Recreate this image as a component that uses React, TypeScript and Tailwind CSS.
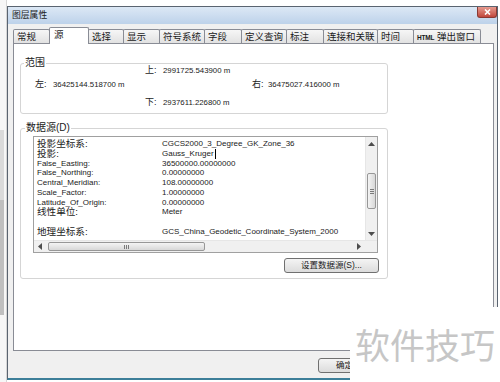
import React from "react";

const tabs: { t: string; w: string; active?: boolean }[] = [
  { t: "常规", w: "w-[37px]" },
  { t: "源", w: "w-[40px]", active: true },
  { t: "选择", w: "w-[36px]" },
  { t: "显示", w: "w-[37px]" },
  { t: "符号系统", w: "w-[46px]" },
  { t: "字段", w: "w-[38px]" },
  { t: "定义查询", w: "w-[46px]" },
  { t: "标注", w: "w-[38px]" },
  { t: "连接和关联", w: "w-[55px]" },
  { t: "时间", w: "w-[37px]" },
  { t: "HTML", w: "w-[68px]" },
];

const rows: { l: string; v: string; cjk?: boolean; cursor?: boolean }[] = [
  { l: "投影坐标系:", v: "CGCS2000_3_Degree_GK_Zone_36", cjk: true },
  { l: "投影:", v: "Gauss_Kruger", cjk: true, cursor: true },
  { l: "False_Easting:", v: "36500000.00000000" },
  { l: "False_Northing:", v: "0.00000000" },
  { l: "Central_Meridian:", v: "108.00000000" },
  { l: "Scale_Factor:", v: "1.00000000" },
  { l: "Latitude_Of_Origin:", v: "0.00000000" },
  { l: "线性单位:", v: "Meter", cjk: true },
  { l: "", v: "" },
  { l: "地理坐标系:", v: "GCS_China_Geodetic_Coordinate_System_2000", cjk: true },
];

function Tri({ dir }: { dir: "up" | "down" | "left" | "right" }) {
  const pts =
    dir === "up"
      ? "0,4 3.5,0 7,4"
      : dir === "down"
      ? "0,0 3.5,4 7,0"
      : dir === "left"
      ? "4,0 0,3.5 4,7"
      : "0,0 4,3.5 0,7";
  const w = dir === "up" || dir === "down" ? 7 : 4;
  const h = dir === "up" || dir === "down" ? 4 : 7;
  return (
    <svg width={w} height={h} viewBox={`0 0 ${w} ${h}`}>
      <polygon points={pts} fill="#4d4d4d" />
    </svg>
  );
}

export default function App() {
  return (
    <div className='relative w-[500px] h-[382px] overflow-hidden bg-white flex font-["Liberation_Sans","Noto_Sans_CJK_SC",sans-serif] text-[#1a1a1a]'>
      {/* background window strip */}
      <div className="w-[7px] h-full flex flex-col bg-[#f6f6f6] border-r border-[#d6d6d6]">
        <div className="h-[130px]" />
        <div className="w-[4px] h-[70px] bg-[#dadada]" />
        <div className="w-[4px] h-[115px] bg-[#bfbfbf]" />
      </div>

      {/* dialog */}
      <div className="mt-[6px] w-[491px] h-[374px] flex flex-col border-l border-r border-t border-[#5a6470] border-b-2 border-b-[#3d7f99] bg-[#f0f0f0]">
        {/* title bar */}
        <div className="h-[17px] flex items-center justify-between bg-gradient-to-b from-[#dce8f5] to-[#bdd2ea] pl-[4px]">
          <span className="text-[8.8px] leading-none text-[#1c1c1c]">图层属性</span>
          <div className="mb-[2px] self-start w-[20px] h-[11px] rounded-b-[3px] border border-t-0 border-[#8a3a33] bg-gradient-to-b from-[#e69a8f] to-[#c0463c] flex items-center justify-center">
            <svg width="7" height="6" viewBox="0 0 7 6">
              <path d="M1 0.5 L6 5.5 M6 0.5 L1 5.5" stroke="white" strokeWidth="1.6" />
            </svg>
          </div>
        </div>

        {/* body */}
        <div className="flex-1 flex flex-col pl-[5px] pr-[3px]">
          {/* tabs */}
          <div className="mt-[3px] h-[16px] flex items-end">
            {tabs.map((tab, i) =>
              tab.active ? (
                <div
                  key={i}
                  className={`${tab.w} -ml-px relative z-10 h-[17px] -mb-px bg-white border-l border-r border-t border-[#898c95] rounded-t-[2px] pl-[4px] pt-[1px] text-[9.5px] leading-[11px]`}
                >
                  {tab.t}
                </div>
              ) : (
                <div
                  key={i}
                  className={`${tab.w} ${i === 0 ? "" : "-ml-px"} h-[14px] bg-gradient-to-b from-[#f6f6f6] to-[#e2e2e2] border-l border-r border-t border-[#898c95] rounded-t-[2px] pl-[3px] pt-[1px] text-[9.5px] leading-[12px] whitespace-nowrap`}
                >
                  {tab.t === "HTML" ? (
                    <>
                      <span className="text-[6.5px] font-bold tracking-[-0.2px]">HTML</span>
                      <span> 弹出窗口</span>
                    </>
                  ) : (
                    tab.t
                  )}
                </div>
              )
            )}
          </div>

          {/* panel */}
          <div className="w-[481px] h-[308px] border border-[#898c95] bg-white flex flex-col">
            {/* 范围 */}
            <div className="relative mt-[19px] ml-[6px] w-[368px] h-[51px] border border-[#d5d5d5] rounded-[3px]">
              <span className="absolute -top-[7px] left-[3px] bg-white px-[1px] text-[10px] leading-[12px]">范围</span>
              <div className="flex flex-col pt-[2px] text-[7.8px]">
                <div className="h-[10px] flex items-center ml-[124px]">
                  <span className="w-[18px] text-[9px]">上:</span>
                  <span>2991725.543900 m</span>
                </div>
                <div className="h-[10px] mt-[4px] flex items-center">
                  <div className="ml-[14px] w-[217px] flex items-center">
                    <span className="w-[18px] text-[9px]">左:</span>
                    <span>36425144.518700 m</span>
                  </div>
                  <span className="w-[16px] text-[9px]">右:</span>
                  <span>36475027.416000 m</span>
                </div>
                <div className="h-[10px] mt-[8px] flex items-center ml-[124px]">
                  <span className="w-[18px] text-[9px]">下:</span>
                  <span>2937611.226800 m</span>
                </div>
              </div>
            </div>

            {/* 数据源 */}
            <div className="relative mt-[14px] ml-[6px] w-[368px] h-[151px] border border-[#d5d5d5] rounded-[3px] flex flex-col">
              <span className="absolute -top-[7px] left-[4px] bg-white px-[1px] text-[10px] leading-[12px]">数据源(D)</span>
              {/* list box */}
              <div className="mt-[7px] ml-[12px] w-[345px] h-[117px] border border-[#a0a0a0] flex flex-col">
                <div className="flex-1 flex">
                  <div className="flex-1 pt-[2px] pl-[3px] flex flex-col overflow-hidden">
                    {rows.map((r, i) => (
                      <div key={i} className="h-[9.75px] flex items-center whitespace-nowrap">
                        <span className={`w-[125px] ${r.cjk ? "text-[9.6px]" : "text-[8px]"} leading-[9.75px]`}>{r.l}</span>
                        <span className="text-[8px] leading-[9.75px]">{r.v}</span>
                        {r.cursor && <span className="inline-block w-px h-[10px] bg-black ml-[1px]" />}
                      </div>
                    ))}
                  </div>
                  {/* vertical scrollbar */}
                  <div className="w-[12px] flex flex-col bg-[#f0f0f0] border-l border-[#e6e6e6]">
                    <div className="h-[13px] flex items-center justify-center">
                      <Tri dir="up" />
                    </div>
                    <div className="h-[23px]" />
                    <div className="h-[36px] mx-[1px] rounded-[2px] border border-[#979797] bg-gradient-to-r from-[#f4f4f4] to-[#d8d8d8] flex flex-col items-center justify-center gap-[1px]">
                      <div className="w-[4px] h-px bg-[#7a7a7a]" />
                      <div className="w-[4px] h-px bg-[#7a7a7a]" />
                      <div className="w-[4px] h-px bg-[#7a7a7a]" />
                    </div>
                    <div className="flex-1" />
                    <div className="h-[13px] flex items-center justify-center">
                      <Tri dir="down" />
                    </div>
                  </div>
                </div>
                {/* horizontal scrollbar */}
                <div className="h-[12px] flex bg-[#f0f0f0] border-t border-[#e6e6e6]">
                  <div className="w-[12px] flex items-center justify-center">
                    <Tri dir="left" />
                  </div>
                  <div className="ml-[2px] w-[157px] my-[1px] rounded-[2px] border border-[#979797] bg-gradient-to-b from-[#f4f4f4] to-[#d8d8d8] flex items-center justify-center gap-[1px]">
                    <div className="w-px h-[4px] bg-[#7a7a7a]" />
                    <div className="w-px h-[4px] bg-[#7a7a7a]" />
                    <div className="w-px h-[4px] bg-[#7a7a7a]" />
                  </div>
                  <div className="flex-1" />
                  <div className="w-[12px] flex items-center justify-center">
                    <Tri dir="right" />
                  </div>
                  <div className="w-[12px] bg-[#f0f0f0]" />
                </div>
              </div>
              {/* button */}
              <div className="mt-[5px] flex justify-end pr-[8px]">
                <div className="w-[95px] h-[15px] rounded-[3px] border border-[#707070] bg-gradient-to-b from-[#f4f4f4] to-[#dcdcdc] flex items-center justify-center text-[8.5px] leading-none">
                  设置数据源(S)...
                </div>
              </div>
            </div>
          </div>

          {/* footer */}
          <div className="flex-1 pt-[7px] pl-[305px]">
            <div className="w-[75px] h-[15px] rounded-[3px] border border-[#707070] bg-gradient-to-b from-[#f4f4f4] to-[#dcdcdc] flex items-center pl-[17px] text-[8.5px] leading-none">
              确定
            </div>
          </div>
        </div>
      </div>

      {/* watermark */}
      <div className="absolute right-0 bottom-0 w-[150px] h-[75px] bg-white pl-[5px] pt-[19px]">
        <span className='block text-[35px] leading-none text-[#c6c6c6] font-["Noto_Sans_CJK_SC",sans-serif] whitespace-nowrap'>软件技巧</span>
      </div>
    </div>
  );
}
